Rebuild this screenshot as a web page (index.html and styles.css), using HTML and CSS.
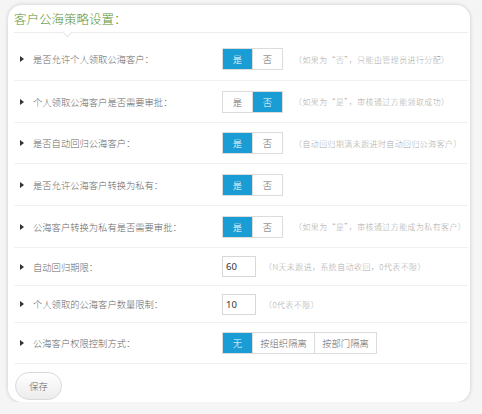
FILE: index.html
```html
<!DOCTYPE html>
<html lang="zh-CN">
  <head>
    <meta charset="UTF-8" />
    <meta name="viewport" content="width=device-width, initial-scale=1.0" />
    <title>客户公海策略设置</title>
    <link rel="stylesheet" href="styles.css">
  </head>
  <body>
    <div class="panel">
      <div class="panel-title">客户公海策略设置：</div>

      <ul class="settings">
        <li class="row first">
          <span class="label">是否允许个人领取公海客户：</span>
          <div class="toggle"><span class="on">是</span><span>否</span></div>
          <span class="hint">（如果为“否”，只能由管理员进行分配）</span>
        </li>
        <li class="row">
          <span class="label">个人领取公海客户是否需要审批：</span>
          <div class="toggle"><span>是</span><span class="on">否</span></div>
          <span class="hint">（如果为“是”，审核通过方能领取成功）</span>
        </li>
        <li class="row short">
          <span class="label">是否自动回归公海客户：</span>
          <div class="toggle"><span class="on">是</span><span>否</span></div>
          <span class="hint">（自动回归期满未跟进时自动回归公海客户）</span>
        </li>
        <li class="row">
          <span class="label">是否允许公海客户转换为私有：</span>
          <div class="toggle"><span class="on">是</span><span>否</span></div>
        </li>
        <li class="row">
          <span class="label">公海客户转换为私有是否需要审批：</span>
          <div class="toggle"><span class="on">是</span><span>否</span></div>
          <span class="hint">（如果为“是”，审核通过方能成为私有客户）</span>
        </li>
        <li class="row field">
          <span class="label">自动回归期限：</span>
          <input class="num" type="text" value="60" />
          <span class="hint">（N天未跟进，系统自动收回，0代表不限）</span>
        </li>
        <li class="row field small">
          <span class="label">个人领取的公海客户数量限制：</span>
          <input class="num" type="text" value="10" />
          <span class="hint">（0代表不限）</span>
        </li>
        <li class="row last">
          <span class="label">公海客户权限控制方式：</span>
          <div class="toggle"><span class="on">无</span><span class="wide">按组织隔离</span><span class="wide">按部门隔离</span></div>
        </li>
      </ul>

      <button class="save">保存</button>
    </div>
  </body>
</html>
```

FILE: styles.css
```css
body {
  margin: 0;
  background: #f5f5f5;
  font-family: "Noto Sans CJK SC", "Noto Sans", sans-serif;
}

.panel {
  width: 462px;
  height: 397px;
  margin: 5px 0 0 8px;
  background: #fff;
  border-radius: 14px;
  box-shadow: 0 0 4px rgba(0, 0, 0, 0.18);
  box-sizing: border-box;
  padding: 0 2px 0 6px;
}

.panel-title {
  position: relative;
  height: 27px;
  line-height: 27px;
  font-size: 12.5px;
  font-weight: 300;
  color: #5a9235;
  border-bottom: 1px solid #ececec;
}

/* little notch under the title line */
.panel-title::after {
  content: "";
  position: absolute;
  left: 50px;
  bottom: -4px;
  width: 6px;
  height: 6px;
  background: #fff;
  border-right: 1px solid #e6e6e6;
  border-bottom: 1px solid #e6e6e6;
  transform: rotate(45deg);
}

.settings {
  list-style: none;
  margin: 0;
  padding: 0;
}

.row {
  display: flex;
  align-items: center;
  height: 42px;
  box-sizing: border-box;
  border-bottom: 1px solid #f1f1f1;
}

.row.first {
  height: 48px;
  padding-top: 5px;
}

.row.short {
  height: 41px;
}

.row.field {
  height: 38px;
}

.row.small {
  height: 37px;
}

.row.last {
  height: 41px;
}

.label {
  display: flex;
  align-items: center;
  width: 208px;
  flex-shrink: 0;
  padding-left: 6px;
  box-sizing: border-box;
  font-size: 9.3px;
  font-weight: 300;
  color: #666;
}

.label::before {
  content: "";
  width: 0;
  height: 0;
  border-left: 4px solid #333;
  border-top: 3px solid transparent;
  border-bottom: 3px solid transparent;
  margin-right: 9px;
}

.toggle {
  display: flex;
  height: 22px;
  border: 1px solid #dcdcdc;
  box-sizing: border-box;
}

.toggle span {
  width: 29px;
  display: flex;
  align-items: center;
  justify-content: center;
  font-size: 9.3px;
  font-weight: 300;
  color: #666;
  background: #fff;
}

.toggle span + span {
  border-left: 1px solid #dcdcdc;
}

.toggle .on {
  background: #1a9dd4;
  color: #fff;
}

.toggle .wide {
  width: 61px;
}

.hint {
  margin-left: 11px;
  font-size: 7.9px;
  font-weight: 300;
  letter-spacing: 0.5px;
  color: #aaa;
  white-space: nowrap;
}

.field .hint {
  margin-left: 8px;
}

.num {
  width: 34px;
  height: 21px;
  box-sizing: border-box;
  border: 1px solid #d8d8d8;
  padding: 0 3px;
  font-family: "Noto Sans", sans-serif;
  font-size: 9.5px;
  color: #333;
}

.save {
  margin: 8px 0 0 1px;
  width: 47px;
  height: 28px;
  border: 1px solid #dadada;
  border-radius: 14px;
  background: linear-gradient(#fff, #ececec);
  font-family: "Noto Sans CJK SC", sans-serif;
  font-size: 9.3px;
  font-weight: 300;
  color: #666;
  padding: 0;
}
```
